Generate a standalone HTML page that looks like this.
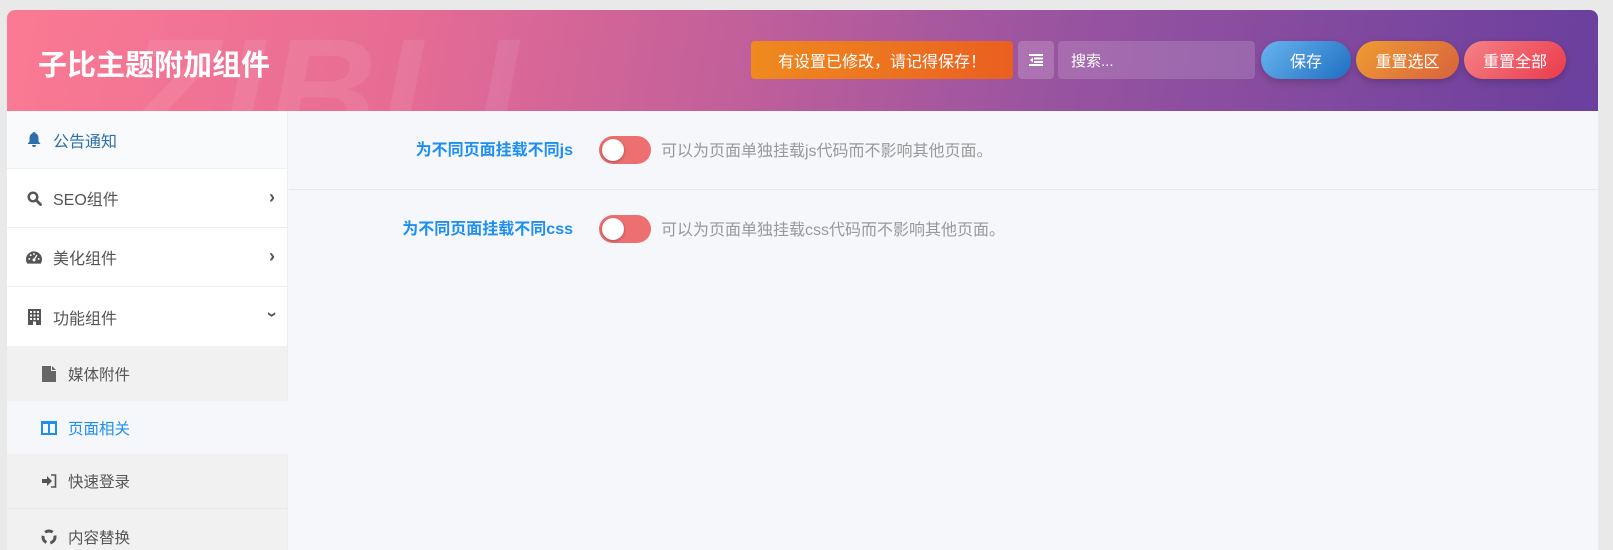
<!DOCTYPE html>
<html><head><meta charset="utf-8"><style>
*{box-sizing:border-box;margin:0;padding:0}
body{width:1613px;height:540px;background:#e9e9e9;font-family:"Liberation Sans","Noto Sans CJK SC",sans-serif;overflow:hidden;position:relative}
.panel{position:absolute;left:7px;top:10px;width:1591px;height:540px;background:#f5f7fa;border-radius:8px 8px 0 0;overflow:hidden}
.hdr{position:absolute;left:0;top:0;width:1591px;height:101px;background:linear-gradient(100deg,#fb7a93 0%,#e66c94 25%,#c3609a 45%,#9a54a0 65%,#6a3f9e 100%);overflow:hidden}
.wm{position:absolute;left:120px;top:-5px;font-size:150px;font-weight:bold;font-style:italic;color:rgba(255,255,255,.08);letter-spacing:4px;font-family:"Liberation Sans",sans-serif}
.title{position:absolute;left:31px;top:32px;color:#fff;font-size:29px;font-weight:bold}
.b{position:absolute;top:31px;height:38px;color:#fff;font-size:16px;display:flex;align-items:center;justify-content:center}
.side{position:absolute;left:0;top:101px;width:281px;height:450px;background:#fff;border-right:1px solid #eee}
.it{height:59px;border-bottom:1px solid #eee;display:flex;align-items:center;padding-left:19px;font-size:16px;color:#555;position:relative}
.it .ic{width:16px;margin-right:11px;display:flex;justify-content:center}
.arr{position:absolute;right:12px;top:18px;font-size:18px;font-weight:bold;color:#555}
.sub{height:55px;display:flex;align-items:center;padding-left:34px;font-size:15.5px;color:#555;background:#f1f1f1}
.sub .ic{width:16px;margin-right:11px;display:flex;justify-content:center}
.row{position:absolute;left:282px;width:1309px;height:79px}
.lbl{position:absolute;right:1025px;color:#1e8ff0;font-weight:bold;font-size:16px}
.tg{position:absolute;left:310px;width:52px;height:28px;border-radius:14px;background:#ee6f70}
.tg::after{content:"";position:absolute;left:3px;top:3px;width:22px;height:22px;border-radius:50%;background:#fff;box-shadow:0 1px 3px rgba(0,0,0,.3)}
.ds{position:absolute;left:372px;color:#999;font-size:16px}
</style></head><body>
<div class="panel">
<div class="hdr">
<div class="wm">ZIBLL</div>
<div class="title">子比主题附加组件</div>
<div class="b" style="left:744px;width:262px;border-radius:4px;background:linear-gradient(90deg,#ef8a1f,#ea5f20)">有设置已修改，请记得保存！</div>
<div class="b" style="left:1011px;width:36px;border-radius:4px;background:rgba(255,255,255,.18)"><svg width="14" height="12" viewBox="0 0 14 12"><rect x="0" y="0" width="14" height="2" fill="#fff"/><rect x="5" y="3.5" width="9" height="2" fill="#fff"/><rect x="5" y="7" width="9" height="2" fill="#fff"/><rect x="0" y="10" width="14" height="2" fill="#fff"/><path d="M4 3.5L1 6l3 2.5z" fill="#fff"/></svg></div>
<div class="b" style="left:1051px;width:197px;border-radius:4px;background:rgba(255,255,255,.15);justify-content:flex-start;padding-left:13px;font-size:15px">搜索...</div>
<div class="b" style="left:1254px;width:90px;border-radius:19px;background:linear-gradient(135deg,#69b4ee,#1f6fc2);box-shadow:0 3px 8px rgba(0,0,0,.2)">保存</div>
<div class="b" style="left:1349px;width:103px;border-radius:19px;background:linear-gradient(135deg,#ee9c33,#d8623d);box-shadow:0 3px 8px rgba(0,0,0,.2)">重置选区</div>
<div class="b" style="left:1457px;width:102px;border-radius:19px;background:linear-gradient(135deg,#f58287,#ea3a4a);box-shadow:0 3px 8px rgba(0,0,0,.2)">重置全部</div>
</div>
<div class="side">
<div class="it" style="height:58px;background:#f8fafc;color:#2d6fa8"><span class="ic"><svg width="14" height="15" viewBox="0 0 14 15"><path d="M7 0c1 0 1.5.6 1.5 1.3C10.5 2 11.5 4 11.5 6.5v3L13.5 12H.5l2-2.5v-3C2.5 4 3.5 2 5.5 1.3 5.5.6 6 0 7 0zM5 13h4a2 2 0 0 1-4 0z" fill="#2d6fa8"/></svg></span>公告通知</div>
<div class="it"><span class="ic"><svg width="15" height="15" viewBox="0 0 15 15"><circle cx="6" cy="6" r="4.3" fill="none" stroke="#555" stroke-width="2.4"/><path d="M9 9l4.5 4.5" stroke="#555" stroke-width="2.8" stroke-linecap="round"/></svg></span>SEO组件<span class="arr">›</span></div>
<div class="it"><span class="ic"><svg width="17" height="13" viewBox="0 0 17 13"><path d="M8.5 0A8.5 8.5 0 0 0 0 8.5c0 1.7.5 3.2 1.3 4.5h14.4c.8-1.3 1.3-2.8 1.3-4.5A8.5 8.5 0 0 0 8.5 0z" fill="#555"/><circle cx="8.5" cy="9" r="1.6" fill="#fff"/><circle cx="3.5" cy="8" r="1" fill="#fff"/><circle cx="13.5" cy="8" r="1" fill="#fff"/><circle cx="5" cy="4" r="1" fill="#fff"/><circle cx="8.5" cy="2.8" r="1" fill="#fff"/><path d="M8.5 9l3-5" stroke="#fff" stroke-width="1.4"/></svg></span>美化组件<span class="arr">›</span></div>
<div class="it" style="border-bottom:none"><span class="ic"><svg width="13" height="16" viewBox="0 0 13 16"><rect width="13" height="16" fill="#555"/><g fill="#fff"><rect x="2" y="2" width="2" height="2"/><rect x="5.5" y="2" width="2" height="2"/><rect x="9" y="2" width="2" height="2"/><rect x="2" y="5.5" width="2" height="2"/><rect x="5.5" y="5.5" width="2" height="2"/><rect x="9" y="5.5" width="2" height="2"/><rect x="2" y="9" width="2" height="2"/><rect x="5.5" y="9" width="2" height="2"/><rect x="9" y="9" width="2" height="2"/><rect x="5" y="12.5" width="3" height="3.5"/></g></svg></span>功能组件<span class="arr" style="transform:rotate(90deg);top:17px">›</span></div>
<div class="sub"><span class="ic"><svg width="14" height="16" viewBox="0 0 14 16"><path d="M0 0h9v5h5v11H0zM10 0l4 4h-4z" fill="#666"/></svg></span>媒体附件</div>
<div class="sub" style="background:#f5f7fa;color:#1e8ff0;width:291px;height:53px"><span class="ic"><svg width="16" height="14" viewBox="0 0 16 14"><rect x="1" y="1" width="14" height="12" fill="none" stroke="#1e8ff0" stroke-width="2"/><path d="M8 1v12M1 2h14" stroke="#1e8ff0" stroke-width="2"/></svg></span>页面相关</div>
<div class="sub" style="border-bottom:1px solid #e8e8e8"><span class="ic"><svg width="15" height="14" viewBox="0 0 15 14"><path d="M0 5h5V2l5 5-5 5V9H0z" fill="#555"/><path d="M9 1h4.5v12H9" fill="none" stroke="#555" stroke-width="1.6"/></svg></span>快速登录</div>
<div class="sub"><span class="ic"><svg width="16" height="16" viewBox="0 0 16 16"><circle cx="8" cy="8" r="6" fill="none" stroke="#555" stroke-width="3" stroke-dasharray="8 4"/></svg></span>内容替换</div>
</div>
<div class="row" style="top:101px;border-bottom:1px solid #e8e9eb">
<div class="lbl" style="top:25px">为不同页面挂载不同js</div>
<div class="tg" style="top:25px"></div>
<div class="ds" style="top:26px">可以为页面单独挂载js代码而不影响其他页面。</div>
</div>
<div class="row" style="top:180px">
<div class="lbl" style="top:25px">为不同页面挂载不同css</div>
<div class="tg" style="top:25px"></div>
<div class="ds" style="top:26px">可以为页面单独挂载css代码而不影响其他页面。</div>
</div>
</div>
</body></html>
